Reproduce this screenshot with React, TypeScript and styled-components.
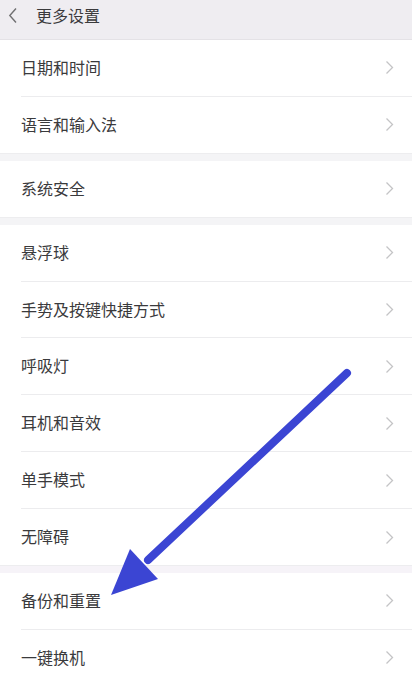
import React from 'react';
import styled, { createGlobalStyle } from 'styled-components';

const GlobalStyle = createGlobalStyle`
  html, body {
    margin: 0;
    padding: 0;
    background: #ffffff;
  }
  body {
    font-family: "Noto Sans CJK SC", "Noto Sans", sans-serif;
  }
`;

const groups: string[][] = [
  ['日期和时间', '语言和输入法'],
  ['系统安全'],
  ['悬浮球', '手势及按键快捷方式', '呼吸灯', '耳机和音效', '单手模式', '无障碍'],
  ['备份和重置', '一键换机'],
];

const ChevronRight = () => (
  <svg width="9" height="15" viewBox="0 0 9 15">
    <path d="M1.5 1.5 L7.5 7.5 L1.5 13.5" fill="none" stroke="#c4c4c6" strokeWidth="1.3" />
  </svg>
);

const ChevronLeft = () => (
  <svg width="10" height="17" viewBox="0 0 10 17">
    <path d="M8 1.5 L1.8 8.5 L8 15.5" fill="none" stroke="#707072" strokeWidth="1.4" />
  </svg>
);

export default function App() {
  return (
    <Page>
      <GlobalStyle />
      <Header>
        <BackButton>
          <ChevronLeft />
        </BackButton>
        <HeaderTitle>更多设置</HeaderTitle>
      </Header>

      {groups.map((items, gi) => (
        <React.Fragment key={gi}>
          {gi > 0 && <GroupGap last={gi === groups.length - 1} />}
          <Group>
            {items.map((label, i) => (
              <Row key={label} divider={i < items.length - 1}>
                <Label>{label}</Label>
                <ChevronRight />
              </Row>
            ))}
          </Group>
        </React.Fragment>
      ))}

      <Arrow viewBox="0 0 412 684" width="412" height="684">
        <line x1="347" y1="373" x2="148" y2="560" stroke="#3b45d3" strokeWidth="8" strokeLinecap="round" />
        <polygon points="130,549 158,579 111,595" fill="#3b45d3" />
      </Arrow>
    </Page>
  );
}

const Page = styled.div`
  position: relative;
  width: 412px;
  height: 684px;
  overflow: hidden;
  background: #ffffff;
`;

const Header = styled.div`
  height: 39px;
  display: flex;
  align-items: center;
  background: #efedf1;
  border-bottom: 1px solid #e4e2e6;
`;

const BackButton = styled.div`
  width: 36px;
  display: flex;
  align-items: center;
  padding-left: 8px;
  box-sizing: border-box;
  margin-top: -9px;
`;

const HeaderTitle = styled.div`
  font-size: 16px;
  color: #3a3a3c;
  margin-top: -10px;
`;

const Group = styled.div`
  background: #ffffff;
`;

const GroupGap = styled.div<{ last?: boolean }>`
  height: 7px;
  background: ${(p) => (p.last ? '#f6f3f8' : '#f4f4f6')};
  border-top: 1px solid #ededef;
`;

const Row = styled.div<{ divider?: boolean }>`
  height: 55.9px;
  display: flex;
  align-items: center;
  justify-content: space-between;
  padding: 0 18px 0 21px;
  position: relative;

  &::after {
    content: '';
    display: ${(p) => (p.divider ? 'block' : 'none')};
    position: absolute;
    left: 21px;
    right: 0;
    bottom: -1px;
    height: 1px;
    background: #ececee;
  }

  & + & {
    margin-top: 1px;
  }
`;

const Label = styled.div`
  font-size: 16px;
  color: #3a3a3c;
  margin-top: -2px;
`;

const Arrow = styled.svg`
  position: absolute;
  left: 0;
  top: 0;
  pointer-events: none;
`;
